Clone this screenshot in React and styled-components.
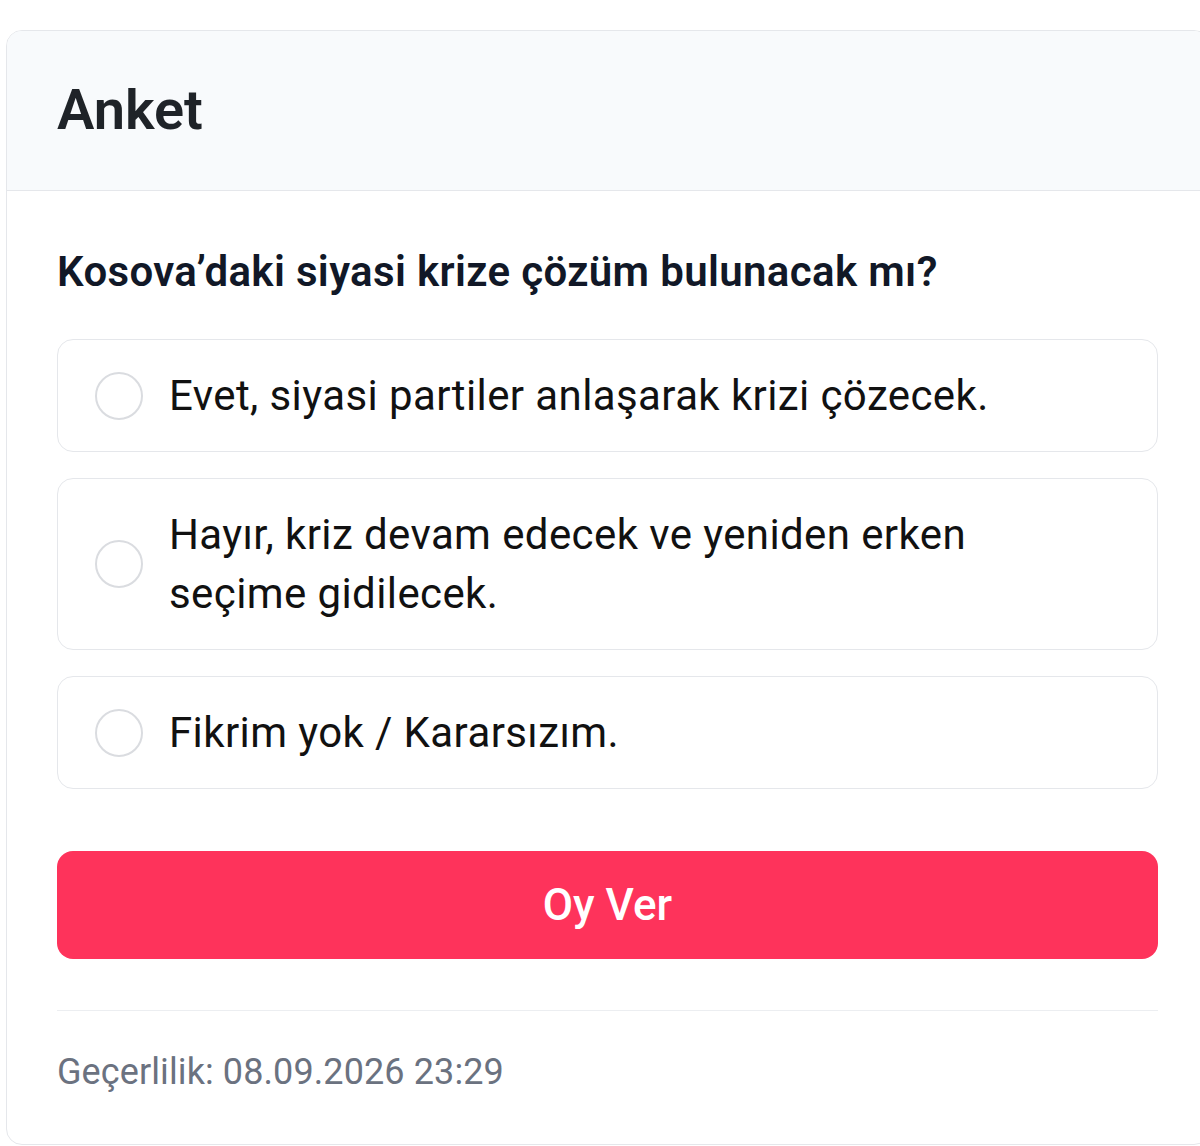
import React from "react";
import styled, { createGlobalStyle } from "styled-components";

const Global = createGlobalStyle`
  html, body {
    margin: 0;
    padding: 0;
    background: #ffffff;
    overflow: hidden;
  }
  body {
    font-family: Roboto, "Liberation Sans", Arial, sans-serif;
    -webkit-font-smoothing: antialiased;
  }
  * { box-sizing: border-box; }
`;

const Page = styled.div`
  padding: 30px 0 0 6px;
  width: 1220px;
`;

const Card = styled.section`
  width: 1204px;
  background: #ffffff;
  border: 1px solid #e5e7eb;
  border-radius: 16px;
  overflow: hidden;
`;

const Header = styled.header`
  background: #f8fafc;
  border-bottom: 1px solid #e5e7eb;
  padding: 46px 50px;
`;

const Title = styled.h2`
  margin: 0;
  font-size: 56px;
  line-height: 67px;
  font-weight: 600;
  color: #1f2328;
`;

const Body = styled.div`
  padding: 54px 51px 50px 50px;
  display: flex;
  flex-direction: column;
`;

const Question = styled.h3`
  margin: 0 0 40px;
  font-size: 42px;
  line-height: 54px;
  font-weight: 600;
  letter-spacing: 0.35px;
  color: #111827;
`;

const Options = styled.div`
  display: flex;
  flex-direction: column;
  gap: 26px;
`;

const Option = styled.label`
  display: flex;
  align-items: center;
  gap: 26px;
  border: 1px solid #e5e7eb;
  border-radius: 16px;
  padding: 26px 64px 26px 37px;
  background: #ffffff;
  cursor: pointer;
`;

const Radio = styled.span`
  flex: 0 0 48px;
  width: 48px;
  height: 48px;
  border-radius: 50%;
  border: 2px solid #dadce0;
  background: #ffffff;
`;

const OptionText = styled.span`
  font-size: 42px;
  line-height: 59px;
  font-weight: 400;
  letter-spacing: 0.4px;
  color: #111111;
`;

const Button = styled.button`
  margin-top: 62px;
  height: 108px;
  border: none;
  border-radius: 16px;
  background: #fe335b;
  color: #ffffff;
  font-family: inherit;
  font-size: 44px;
  font-weight: 500;
  cursor: pointer;
`;

const Divider = styled.hr`
  margin: 51px 0 0;
  border: none;
  border-top: 1px solid #eceef1;
`;

const Footer = styled.p`
  margin: 39px 0 0;
  font-size: 36px;
  line-height: 44px;
  letter-spacing: 0.1px;
  color: #6b7280;
`;

const options = [
  "Evet, siyasi partiler anlaşarak krizi çözecek.",
  "Hayır, kriz devam edecek ve yeniden erken seçime gidilecek.",
  "Fikrim yok / Kararsızım.",
];

export default function App() {
  return (
    <>
      <Global />
      <Page>
        <Card>
          <Header>
            <Title>Anket</Title>
          </Header>
          <Body>
            <Question>Kosova’daki siyasi krize çözüm bulunacak mı?</Question>
            <Options>
              {options.map((o) => (
                <Option key={o}>
                  <Radio />
                  <OptionText>{o}</OptionText>
                </Option>
              ))}
            </Options>
            <Button type="button">Oy Ver</Button>
            <Divider />
            <Footer>Geçerlilik: 08.09.2026 23:29</Footer>
          </Body>
        </Card>
      </Page>
    </>
  );
}
